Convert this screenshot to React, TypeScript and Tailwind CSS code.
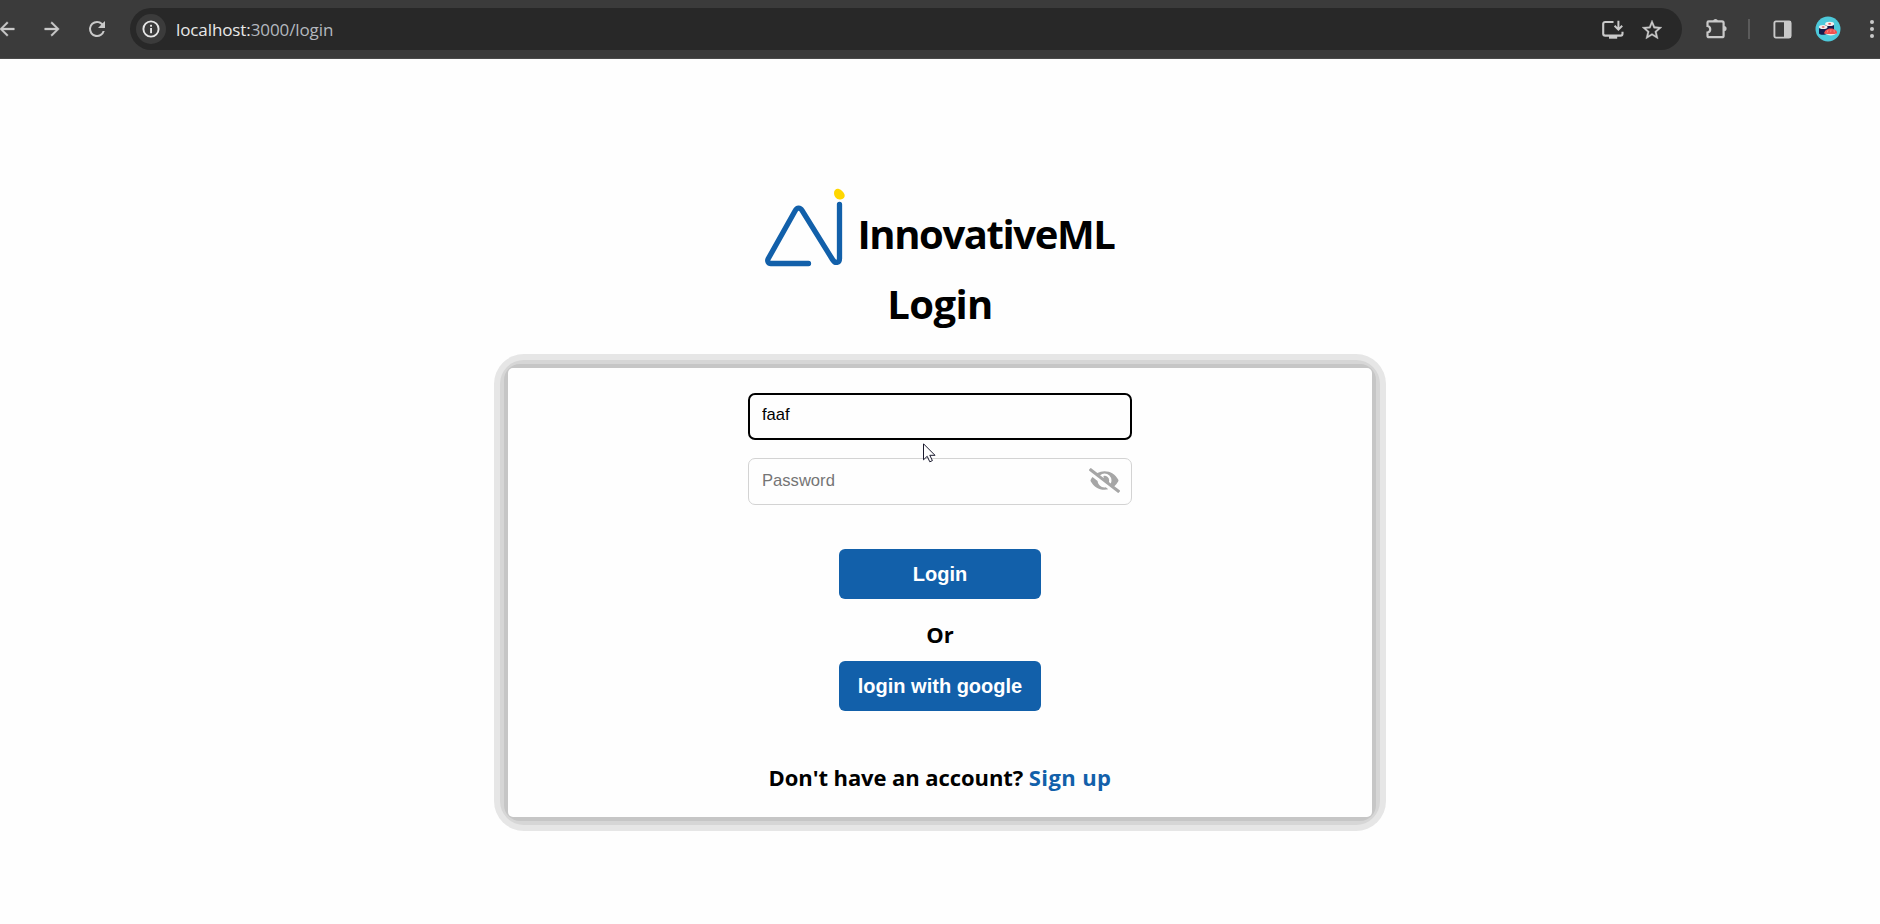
const SEGOE = "font-['Open_Sans','Noto_Sans',sans-serif]";

function BackIcon() {
  return (
    <svg className="size-[22px]" viewBox="0 0 24 24" fill="#c9c9c9" stroke="#c9c9c9" strokeWidth=".4">
      <path d="M20 11H7.8l5.6-5.6L12 4l-8 8 8 8 1.4-1.4L7.8 13H20z" />
    </svg>
  );
}

function ForwardIcon() {
  return (
    <svg className="size-[22px]" viewBox="0 0 24 24" fill="#c9c9c9" stroke="#c9c9c9" strokeWidth=".4">
      <path d="M12 4l-1.4 1.4 5.6 5.6H4v2h12.2l-5.6 5.6L12 20l8-8z" />
    </svg>
  );
}

function ReloadIcon() {
  return (
    <svg className="size-[24px]" viewBox="0 0 24 24" fill="#c9c9c9">
      <path d="M17.65 6.35A7.96 7.96 0 0 0 12 4a8 8 0 1 0 7.73 10h-2.08A6 6 0 1 1 12 6c1.66 0 3.14.69 4.22 1.78L13 11h7V4z" />
    </svg>
  );
}

function BrowserBar() {
  return (
    <header className="flex h-[59px] w-full items-start border-b border-[#4a4a4a] bg-[#3b3b3b]">
      <div className="flex h-[58px] w-[130px] shrink-0 items-center">
        <div className="-ml-[4px]"><BackIcon /></div>
        <div className="ml-[23px]"><ForwardIcon /></div>
        <div className="ml-[22px]"><ReloadIcon /></div>
      </div>
      <div className="mt-2 flex h-[42px] w-[1552px] shrink-0 items-center rounded-full bg-[#282828]">
        <div className="ml-[6px] flex size-[30px] items-center justify-center rounded-full bg-[#3b3b3b]">
          <svg className="size-[18px]" viewBox="0 0 18 18">
            <circle cx="9" cy="9" r="7.6" fill="none" stroke="#e6e6e6" strokeWidth="1.9" />
            <rect x="8.1" y="8" width="1.9" height="5.2" fill="#e6e6e6" />
            <rect x="8.1" y="4.8" width="1.9" height="1.9" fill="#e6e6e6" />
          </svg>
        </div>
        <p className={`${SEGOE} ml-[10px] mt-px text-[17px] leading-6 tracking-[-0.1px] text-[#b4b8bf]`}>
          <span className="text-[#e8e8e8]">localhost:</span>3000/login
        </p>
        <svg className="ml-auto mt-[2px] h-[20px] w-[22px]" viewBox="0 0 22 20">
          <path d="M11.5 2H3.2C2 2 1.2 2.8 1.2 3.8v10c0 1 .8 1.8 2 1.8h15.5c1 0 1.8-.8 1.8-1.8v-2" fill="none" stroke="#c9c9c9" strokeWidth="2.1" />
          <path d="M7 15.5h8.2v3.2H7z" fill="#c9c9c9" />
          <path d="M16.4.8v8M12.6 5.8l3.8 3.8 3.8-3.8" fill="none" stroke="#c9c9c9" strokeWidth="2" />
        </svg>
        <svg className="ml-[16px] mr-[18px] mt-[2px] size-[24px]" viewBox="0 0 24 24" fill="#c9c9c9" stroke="#c9c9c9" strokeWidth=".3">
          <path d="M22 9.24l-7.19-.62L12 2 9.19 8.63 2 9.24l5.46 4.73L5.82 21 12 17.27 18.18 21l-1.63-7.03L22 9.24zM12 15.4l-3.76 2.27 1-4.28-3.32-2.88 4.38-.38L12 6.1l1.71 4.04 4.38.38-3.32 2.88 1 4.28L12 15.4z" />
        </svg>
      </div>
      <div className="flex h-[58px] flex-1 items-center">
        <svg className="mb-[2px] ml-[23px] h-[22px] w-[24px]" viewBox="0 0 24 22">
          <path d="M3.7 4.3H17c1 0 1.6.6 1.6 1.6v12.8c0 .9-.6 1.5-1.6 1.5H3.7c-.7 0-1.2-.4-1.2-1.1v-3.6a3.3 3.3 0 0 0 0-6.5V5.4c0-.7.5-1.1 1.2-1.1z" fill="none" stroke="#c9c9c9" strokeWidth="2.2" />
          <path d="M8 4a2.6 2.8 0 0 1 5 0zM19 8.9a2.6 2.6 0 0 1 0 5.2z" fill="#c9c9c9" />
        </svg>
        <div className="ml-[19px] h-[20px] w-[2px] bg-[#5b5b5b]" />
        <svg className="ml-[23px] h-[19px] w-[19px]" viewBox="0 0 19 19">
          <rect x="1.4" y="1.4" width="16.2" height="16.2" rx="1.5" fill="none" stroke="#c9c9c9" strokeWidth="1.9" />
          <path d="M11 1h7v17h-7z" fill="#c9c9c9" />
        </svg>
        <svg className="ml-[23px] size-[26px]" viewBox="0 0 26 26">
          <circle cx="13" cy="13" r="12.5" fill="#4dc9da" />
          <path d="M10 9v5h9V8z" fill="#16194a" />
          <ellipse cx="14.6" cy="7.9" rx="4.5" ry="2.1" fill="#f5f0ee" />
          <ellipse cx="14.6" cy="7.9" rx="1.5" ry=".8" fill="#e0564e" />
          <path d="M4 11v6.5c1 1.8 6.5 1.8 8 0V11z" fill="#16194a" />
          <ellipse cx="8.2" cy="11" rx="4.3" ry="2.1" fill="#f5f0ee" />
          <ellipse cx="8.2" cy="11" rx="1.5" ry=".8" fill="#e0564e" />
          <path d="M10 17c2 3.4 10 3.2 11.5 0z" fill="#f7e6e2" />
          <path d="M9 17.4c1-4.4 6-5.6 9.5-4.4 3 1 4 3.2 3.4 4.4-3 .8-8 1-12.9 0z" fill="#f0504e" />
          <path d="M13 14l-.8 2.6M16 13.4l-.3 2.8M19 14l.3 2.4" stroke="#f79a90" strokeWidth=".7" />
        </svg>
        <svg className="ml-[28px] h-[20px] w-[6px]" viewBox="0 0 6 20" fill="#c9c9c9">
          <circle cx="3" cy="3" r="2" />
          <circle cx="3" cy="10" r="2" />
          <circle cx="3" cy="17" r="2" />
        </svg>
      </div>
    </header>
  );
}

function Logo() {
  return (
    <svg className="h-[82px] w-[82px]" viewBox="0 0 82 82">
      <path
        d="M43.5 75.5H5.8C3.2 75.5 2 73 3.200 70.8L30.3 22.5C32 19.3 35.2 19.3 37 22.3L67.5 71.5C70.3 76 74.5 75 74.5 70.5V16.5"
        fill="none"
        stroke="#1260aa"
        strokeWidth="5.3"
        strokeLinecap="round"
        strokeLinejoin="round"
      />
      <path d="M69 5C69 2 71.5 0 74 1c2.8 1 5.7 4.2 5.7 6.5 0 2.8-2.4 4-5 4-3.3 0-5.7-3-5.7-6.5z" fill="#ffd700" />
    </svg>
  );
}

function EyeOffIcon() {
  return (
    <svg className="h-[25px] w-[31px]" viewBox="0 0 640 512" fill="#a6a6a6">
      <path d="M320 400c-75.850 0-137.250-58.710-142.900-133.110L72.200 185.820c-13.790 17.300-26.480 35.590-36.720 55.590a32.350 32.350 0 0 0 0 29.190C89.710 376.410 197.070 448 320 448c26.910 0 52.870-4 77.890-10.460L346 397.390a144.130 144.130 0 0 1-26 2.610zm313.820 58.100l-110.550-85.440a331.250 331.250 0 0 0 81.250-102.070 32.350 32.350 0 0 0 0-29.190C550.290 135.590 442.930 64 320 64a308.150 308.150 0 0 0-147.320 37.700L45.460 3.370A16 16 0 0 0 23 6.180L3.370 31.450A16 16 0 0 0 6.180 53.900l588.360 454.730a16 16 0 0 0 22.460-2.810l19.640-25.270a16 16 0 0 0-2.820-22.450zm-183.720-142l-39.300-30.380A94.750 94.750 0 0 0 416 256a94.760 94.760 0 0 0-121.310-92.210A47.650 47.650 0 0 1 304 192a46.640 46.640 0 0 1-1.540 10l-73.610-56.890A142.310 142.310 0 0 1 320 112a143.920 143.920 0 0 1 144 144c0 21.630-5.290 41.790-13.900 60.110z" />
    </svg>
  );
}

function Cursor() {
  return (
    <svg className="absolute left-[175px] top-[50px] h-[21px] w-[14px]" viewBox="0 0 14 21">
      <path d="M.5.8v16l3.7-3.5 2.6 5.500 2.6-1.200-2.600-5.300h5.200z" fill="#fff" stroke="#1a1a2e" strokeWidth="1" />
    </svg>
  );
}

function ActionButton({ label }: { label: string }) {
  return (
    <button className="flex h-[50px] w-[202px] items-center justify-center rounded-[6px] bg-[#1260aa] pb-px font-['Liberation_Sans',Arial,sans-serif] text-[20px] font-bold leading-6 text-white">
      {label}
    </button>
  );
}

function LoginCard() {
  return (
    <div className="mt-[23px] rounded-[30px] bg-[#e6e6e6] p-[6px]">
      <div className="rounded-[24px] bg-[#d6d6d6] p-1">
        <div className="rounded-[16px] bg-[#c6c6c6] p-1">
          <div className="flex h-[449px] w-[864px] flex-col items-center rounded-[5px] bg-[#fefefe] pt-[25px]">
            <div className="relative">
              <input
                defaultValue="faaf"
                className="block h-[47px] w-[384px] rounded-[7px] border-2 border-black bg-transparent px-[12px] pb-[3px] font-['Liberation_Sans',Arial,sans-serif] text-[16.6px] text-black outline-none"
              />
              <Cursor />
            </div>
            <div className="mt-[18px] flex h-[47px] w-[384px] items-center rounded-[7px] border border-[#d3d3d3] pl-[13px] pr-[11px]">
              <input
                placeholder="Password"
                className="min-w-0 flex-1 bg-transparent pb-px font-['Liberation_Sans',Arial,sans-serif] text-[16.6px] placeholder:text-[#757575] outline-none"
              />
              <div className="pb-[2px]"><EyeOffIcon /></div>
            </div>
            <div className="mt-[44px]"><ActionButton label="Login" /></div>
            <p className={`${SEGOE} flex h-[62px] items-center pt-[8px] text-[22px] font-bold leading-7 text-black`}>Or</p>
            <ActionButton label="login with google" />
            <p className={`${SEGOE} mt-[51px] whitespace-nowrap text-[22px] font-bold leading-[30px] tracking-[-0.08px] text-black`}>
              Don't have an account? <a className="tracking-[0.4px] text-[#1260aa]">Sign up</a>
            </p>
          </div>
        </div>
      </div>
    </div>
  );
}

export default function App() {
  return (
    <div className="flex h-[924px] w-[1880px] flex-col overflow-hidden bg-[#fefefe]">
      <BrowserBar />
      <main className="flex flex-col items-center pt-[129px]">
        <div className="flex h-[82px] items-start">
          <Logo />
          <h1 className={`${SEGOE} ml-[11px] mt-[19px] w-[258px] whitespace-nowrap text-[40px] font-bold leading-[54px] tracking-[-1.4px] text-black`}>
            InnovativeML
          </h1>
        </div>
        <h2 className={`${SEGOE} mt-[7px] text-[40px] font-bold leading-[54px] tracking-[-0.6px] text-black`}>Login</h2>
        <LoginCard />
      </main>
    </div>
  );
}
